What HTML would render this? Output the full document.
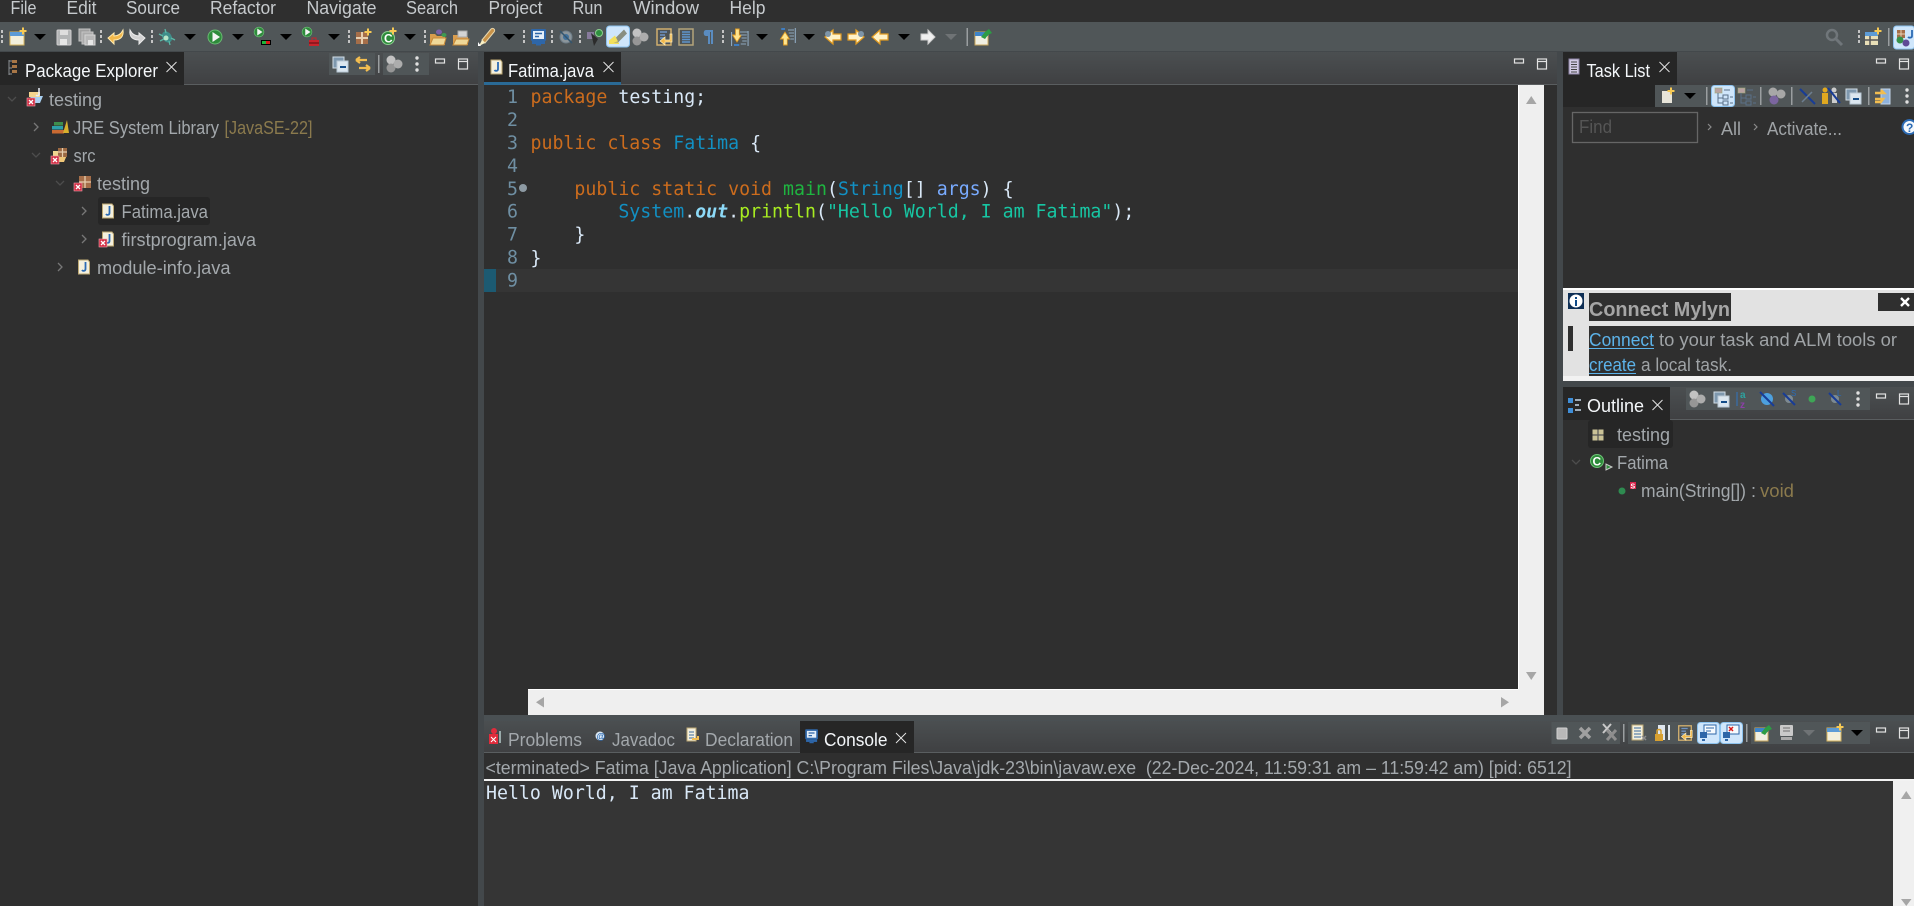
<!DOCTYPE html>
<html><head><meta charset="utf-8"><title>Eclipse</title>
<style>
html,body{margin:0;padding:0;width:1914px;height:906px;overflow:hidden;background:#2f2f2f}
svg{display:block}
text{font-family:"Liberation Sans",sans-serif;font-size:18px;white-space:pre}
.m{fill:#c6cacd}.w{fill:#f4f7fa}.g{fill:#a3a8ac}.o{fill:#8b7a4d}.d{fill:#9fa3a6}
.c text,text.c{font-family:"DejaVu Sans Mono",monospace;font-size:18.24px}
.k{fill:#cc6c1d}.n{fill:#d9e8f7}.b{fill:#1290c3}.l{fill:#6f8fa3}
</style></head><body>
<svg width="1914" height="906" viewBox="0 0 1914 906" xmlns="http://www.w3.org/2000/svg">
<defs>
<linearGradient id="tb" x1="0" y1="0" x2="0" y2="1"><stop offset="0" stop-color="#4b4f51"/><stop offset="1" stop-color="#3f4042"/></linearGradient>
<g id="drop"><path d="M-6-3H6L0 3Z" fill="#000"/></g>
<g id="dropg"><path d="M-6-3H6L0 3Z" fill="#6f7375"/></g>
<g id="grip" fill="#c4c4c4"><rect x="-1" y="-7" width="2" height="3"/><rect x="-1" y="-2" width="2" height="3"/><rect x="-1" y="3" width="2" height="3"/></g>
<g id="dots" fill="#e0e0e0"><circle cy="-6" r="1.7"/><circle r="1.7"/><circle cy="6" r="1.7"/></g>
<g id="plus" fill="#f6c955"><path d="M-1-3.500h2v2.500h2.500v2h-2.500v2.500h-2v-2.500h-2.500v-2h2.500z"/></g>
<g id="new"><rect x="-7" y="-5" width="14" height="13" fill="#f2efdc" stroke="#d8b65e"/><rect x="-7" y="-5" width="14" height="4" fill="#5c9bd6"/><use href="#plus" x="6" y="-6"/></g>
<g id="save"><rect x="-7" y="-7" width="14" height="15" rx="1" fill="#b4b6b7" stroke="#cfcfcf"/><rect x="-4" y="-7" width="8" height="5" fill="#dedede"/><rect x="-4" y="2" width="7" height="6" fill="#e6e6e6"/></g>
<g id="saveall"><rect x="-8" y="-8" width="11" height="12" fill="#a0a0a0" stroke="#c4c4c4"/><rect x="-5" y="-5" width="11" height="12" fill="#ababab" stroke="#c4c4c4"/><rect x="-2" y="-2" width="10" height="10" fill="#b8b8b8" stroke="#d4d4d4"/><rect x="1" y="3" width="5" height="5" fill="#e6e6e6"/></g>
<g id="undo"><path d="M7-7C8 0 4 3-2 3V7L-8 1-2-4V-1C2-1 5-3 7-7Z" fill="#f2b84a" stroke="#ffeab0"/></g>
<g id="redo"><path d="M-7-7C-8 0-4 3 2 3V7L8 1 2-4V-1C-2-1-5-3-7-7Z" fill="#d2d2d2" stroke="#ececec"/></g>
<g id="bug"><ellipse rx="4.500" ry="6" fill="#3f8e8a" transform="rotate(-35)"/><path d="M-8-3-4-1M-7 4-3 2M-2-8-1-4M8 3 4 1M3 8 2 4" stroke="#5ab8a6" stroke-width="1.300"/><circle cx="-1" cy="1" r="2.500" fill="#b8e6c8"/></g>
<g id="run"><circle r="7" fill="#2e8b3b" stroke="#69b873"/><path d="M-2.500-5 5 0-2.500 5Z" fill="#f4f4f4"/></g>
<g id="cov"><use href="#run" transform="translate(-4 -5) scale(.7)"/><rect x="-2" y="3" width="10" height="5" fill="#000"/><rect x="-1" y="4" width="4" height="3" fill="#1db53a"/><rect x="3" y="4" width="4" height="3" fill="#d81818"/></g>
<g id="ext"><use href="#run" transform="translate(-4 -5) scale(.7)"/><rect x="-2" y="3" width="10" height="6" fill="#c8242c"/><rect x="1" y="1" width="4" height="2.500" fill="none" stroke="#c8242c"/><rect x="-2" y="5.500" width="10" height="1" fill="#5c0b10"/></g>
<g id="pkgn"><rect x="-7" y="-5" width="12" height="12" fill="#a56e49"/><path d="M-7 1H5M-1-5V7" stroke="#e6cfb0" stroke-width="2"/><use href="#plus" x="5" y="-5"/></g>
<g id="cls"><circle cy="1" r="6.500" fill="#2e8b3b" stroke="#8ad08f"/><text x="-4" y="5.500" style="font-size:12px;font-weight:bold" fill="#fff">C</text><use href="#plus" x="5" y="-6"/></g>
<g id="folderp"><path d="M-8-3h5l2 2h8v9h-15z" fill="#d99c4d"/><path d="M-8 8-5 1H8L6 8Z" fill="#f0d898" stroke="#c68a3a"/><ellipse cx="1" cy="-5" rx="3" ry="2.500" fill="#7a60a8"/><ellipse cx="6" cy="-2" rx="2.500" ry="2" fill="#3e9a52"/></g>
<g id="foldero"><path d="M-8-2h5l2 2h8v8h-15z" fill="#d99c4d"/><rect x="-3" y="-6" width="9" height="6" fill="#d4d4d4" stroke="#aaa"/><path d="M-8 8-5 2H8L6 8Z" fill="#f0d898" stroke="#c68a3a"/></g>
<g id="pen"><path d="M-4 3 5-8C7-10 10-7 8-5L-1 6Z" fill="#c89248" stroke="#e8d8b0"/><path d="M-4 3-1 6-7 9Z" fill="#f8f0c4"/><path d="M-8 5-5 9-8 9Z" fill="#fff"/></g>
<g id="term"><rect x="-8" y="-8" width="15" height="12" rx="1" fill="#2e66a8"/><rect x="-6" y="-6" width="11" height="8" fill="#e4eef8"/><path d="M-4-3.500H3M-4-.5H0" stroke="#2e66a8" stroke-width="1.500"/><rect x="-7" y="4" width="13" height="3" fill="#2e66a8"/><rect x="-3" y="7" width="5" height="1.500" fill="#2e66a8"/></g>
<g id="scan"><circle r="6" fill="#8b959b" stroke="#6e7d88" stroke-width="1"/><circle r="3" fill="#40719c"/><path d="M-6-6 6 6" stroke="#33556e" stroke-width="1.500"/></g>
<g id="pers"><rect x="-7" y="-5" width="7" height="7" fill="#877a9c"/><path d="M-3-4 0 9 4 2Z" fill="#2b2b2b"/><circle cx="5" cy="-4" r="3.500" fill="#2f8f3f" stroke="#8bd08f"/></g>
<g id="hl"><rect x="-11.500" y="-10.500" width="23" height="21" rx="3" fill="#cfe6fb" stroke="#8cc2ee"/><path d="M-7 6 6-7 9-3 0 6Z" fill="#898e80"/><path d="M-9 4-3-1 0 5-9 7Z" fill="#f2e05c"/><rect x="-9" y="6" width="10" height="1.500" fill="#f2e05c"/></g>
<g id="focus"><circle cx="-3" cy="-4" r="4.500" fill="#c2c2c2"/><circle cx="-3" cy="4" r="4.500" fill="#969696"/><circle cx="4" cy="0" r="4.500" fill="#adadad"/></g>
<g id="focusp"><circle cx="-3" cy="-4" r="4.500" fill="#a7a7a7"/><circle cx="5" cy="-2" r="4.500" fill="#a7a7a7"/><circle cx="-2" cy="4" r="4.500" fill="#7b659f"/></g>
<g id="nxtann"><rect x="-7" y="-8" width="14" height="16" fill="#4d5254" stroke="#cfae6e" stroke-width="1.500"/><path d="M-4-5H3M-4-2H1M-4 1H0" stroke="#6e93c4" stroke-width="1.500"/><path d="M6-3V3H1V0L-4 4 1 8V5H8V-3Z" fill="#f2b84a" stroke="#fff0c0" stroke-width=".7"/></g>
<g id="block"><rect x="-7" y="-8" width="14" height="16" fill="#4d5254" stroke="#b4a47a" stroke-width="1.500"/><path d="M-4-5H4M-4-2.500H4M-4 0H4M-4 2.500H4M-4 5H4" stroke="#5f95cc" stroke-width="1.500"/></g>
<g id="para"><path d="M-1-7H-3C-6-7-6-1-3-1H-1V7H1V-5H2V7H4V-7Z" fill="#5a8cc0"/></g>
<g id="ndn"><path d="M-2-9H3V-3H6L0 4-6-3H-2Z" fill="#ffe58e" stroke="#e09a20"/><path d="M4-6H14M5-3H13M6 0H13M7 3H13M5 6H12" stroke="#8ea8be" stroke-width="1"/><rect x="14" y="-7" width="1.500" height="15" fill="#8ea8be"/><rect x="-8" y="-6" width="1.500" height="14" fill="#8ea8be"/><rect x="-4" y="6" width="7" height="2" fill="#3f7dc0"/></g>
<g id="nup"><path d="M-2 9H3V3H6L0-4-6 3H-2Z" fill="#ffe58e" stroke="#e09a20"/><path d="M4-6H12M5-3H12M6 0H12M7 3H12" stroke="#8ea8be" stroke-width="1"/><rect x="13" y="-8" width="1.500" height="15" fill="#8ea8be"/><rect x="-5" y="-8" width="5" height="2" fill="#3f7dc0"/></g>
<g id="al"><path d="M8-3V3H0V7L-8 0 0-7V-3Z" fill="#fff2c8" stroke="#e09a20" stroke-width="1.200"/></g>
<g id="ar"><path d="M-8-3V3H0V7L8 0 0-7V-3Z" fill="#fff2c8" stroke="#e09a20" stroke-width="1.200"/></g>
<g id="arw"><path d="M-7-3V3H0V7L7 0 0-7V-3Z" fill="#f0f0f0" stroke="#ccc"/></g>
<g id="pin"><rect x="-7" y="-5" width="13" height="13" fill="#f0efe2" stroke="#cda95e"/><rect x="-7" y="-5" width="13" height="4" fill="#3f84c8"/><path d="M-1 0 3-5 7-8 10-4 6-2 3 2Z" fill="#2d9c45"/></g>
<g id="srch"><circle cx="-2" cy="-2" r="5" fill="none" stroke="#70767a" stroke-width="2.500"/><path d="M2 2 8 8" stroke="#70767a" stroke-width="3"/></g>
<g id="pers2"><rect x="-7" y="-5" width="13" height="13" fill="#e8dfb8"/><rect x="-7" y="-5" width="13" height="4" fill="#5c9bd6"/><path d="M-2-1V8M-7 3H6" stroke="#555" stroke-width="1.500"/><use href="#plus" x="6" y="-6"/></g>
<g id="coll"><rect x="-7" y="-7" width="11" height="11" fill="#7e98ae" stroke="#d2dde6"/><rect x="-3" y="-3" width="11" height="11" fill="#dbe6ef" stroke="#b9c8d5"/><rect x="0" y="2" width="6" height="2" fill="#144c88"/></g>
<g id="link"><path d="M-7-4H4M-7-4-3-7M-7-4-3-1M7 4H-4M7 4 3 1M7 4 3 7" stroke="#f2bd50" stroke-width="2.200" fill="none"/></g>
<g id="min"><rect x="-4.500" y="-2" width="9" height="4" fill="none" stroke="#e2e2e2" stroke-width="1.200"/></g>
<g id="max"><rect x="-4.500" y="-5" width="9" height="10" fill="none" stroke="#e2e2e2" stroke-width="1.200"/><path d="M-4.500-2.500H4.500" stroke="#e2e2e2" stroke-width="1.200"/></g>
<g id="x"><path d="M-5-5 5 5M5-5-5 5" stroke="#e8e8e8" stroke-width=".9"/></g>
<g id="cr" stroke-width="1.300" fill="none"><path d="M-2-4 2 0-2 4" stroke="#777"/></g>
<g id="cd" stroke-width="1.300" fill="none"><path d="M-4-2 0 2 4-2" stroke="#4d4d4d"/></g>
<g id="err"><rect x="-4" y="-4" width="8" height="8" fill="#d32f46" stroke="#f2a0ac" stroke-width=".6"/><path d="M-2-2 2 2M2-2-2 2" stroke="#fff" stroke-width="1.300"/></g>
<g id="jfile"><path d="M-5.500-7H4L5.500-5V7H-5.500Z" fill="#f4f0de" stroke="#bda873"/><path d="M1.500-5V2C1.500 4-1 4.500-2 3" fill="none" stroke="#2c6bb4" stroke-width="1.800"/></g>
<g id="prj"><path d="M-6-1 7-1 4 6H-4Z" fill="#a9d0f2"/><path d="M-7-5H4V0H-7Z" fill="#f5d48e"/><path d="M3-9V-3C3-1 1-1 0-2" fill="none" stroke="#e8eef8" stroke-width="1.500"/><use href="#err" x="-5" y="5"/></g>
<g id="lib"><rect x="-8" y="3" width="12" height="3.500" fill="#c96a32"/><rect x="-8" y="-1" width="11" height="3.500" fill="#2d9fa8"/><rect x="-6" y="-5" width="9" height="3.500" fill="#3e8e4c"/><path d="M3 6 7-7 9 6Z" fill="#d8b02e"/></g>
<g id="src"><path d="M-7 0H7L4 7H-4Z" fill="#f0c778"/><rect x="-2" y="-7" width="9" height="9" fill="#9c6942"/><path d="M-2-3H7M2.500-7V2" stroke="#e6cfb0" stroke-width="1.200"/><path d="M-7-4H-2V1H-7Z" fill="#f0d690"/><use href="#err" x="-5" y="5"/></g>
<g id="pk"><rect x="-5" y="-7" width="12" height="12" fill="#a56e49"/><path d="M-5-1H7M1-7V5" stroke="#e6cfb0" stroke-width="1.300"/><use href="#err" x="-6" y="4"/></g>
<g id="ttl"><rect x="-6" y="-8" width="10" height="15" fill="#d2cbe4" stroke="#8d84a6"/><path d="M-4-5H2M-4-2.500H2M-4 0H2M-4 2.500H2M-4 5H2" stroke="#444" stroke-width="1"/></g>
<g id="hier"><rect x="-8" y="-8" width="7" height="5" fill="#b9a2a2" stroke="#9a7" stroke-opacity=".6"/><path d="M-5-3V7H0M-5 2H0" stroke="#5a7088" fill="none"/><rect x="0" y="-1" width="5" height="4" fill="none" stroke="#5a7088"/><rect x="0" y="5" width="5" height="4" fill="none" stroke="#5a7088"/><path d="M1-6H7M7 1H10M7 7H10" stroke="#5a7088"/></g>
</defs>

<!-- menu bar -->
<rect width="1914" height="22" fill="#2f2f2f"/>
<text class="m" x="10.500" y="14" textLength="26" lengthAdjust="spacingAndGlyphs">File</text>
<text class="m" x="66.500" y="14" textLength="30" lengthAdjust="spacingAndGlyphs">Edit</text>
<text class="m" x="126" y="14" textLength="54" lengthAdjust="spacingAndGlyphs">Source</text>
<text class="m" x="210" y="14" textLength="66" lengthAdjust="spacingAndGlyphs">Refactor</text>
<text class="m" x="306.500" y="14" textLength="70" lengthAdjust="spacingAndGlyphs">Navigate</text>
<text class="m" x="406" y="14" textLength="52" lengthAdjust="spacingAndGlyphs">Search</text>
<text class="m" x="488.500" y="14" textLength="54" lengthAdjust="spacingAndGlyphs">Project</text>
<text class="m" x="572.500" y="14" textLength="30" lengthAdjust="spacingAndGlyphs">Run</text>
<text class="m" x="633" y="14" textLength="66" lengthAdjust="spacingAndGlyphs">Window</text>
<text class="m" x="729.500" y="14" textLength="36" lengthAdjust="spacingAndGlyphs">Help</text>

<!-- main toolbar -->
<rect y="22" width="1914" height="29" fill="#505658"/>
<use href="#grip" x="2" y="37"/><use href="#new" x="17" y="37"/><use href="#drop" x="40" y="37"/>
<use href="#save" x="64" y="37"/><use href="#saveall" x="87" y="37"/><use href="#grip" x="101" y="37"/>
<use href="#undo" x="116" y="37"/><use href="#redo" x="137" y="37"/><use href="#grip" x="152" y="37"/>
<use href="#bug" x="167" y="37"/><use href="#drop" x="190" y="37"/>
<use href="#run" x="215" y="37"/><use href="#drop" x="238" y="37"/>
<use href="#cov" x="263" y="37"/><use href="#drop" x="286" y="37"/>
<use href="#ext" x="311" y="37"/><use href="#drop" x="334" y="37"/><use href="#grip" x="349" y="37"/>
<use href="#pkgn" x="363" y="37"/><use href="#cls" x="388" y="37"/><use href="#drop" x="410" y="37"/><use href="#grip" x="425" y="37"/>
<use href="#folderp" x="438" y="37"/><use href="#foldero" x="461" y="37"/><use href="#pen" x="486" y="37"/><use href="#drop" x="509" y="37"/><use href="#grip" x="524" y="37"/>
<use href="#term" x="539" y="37"/><use href="#grip" x="552" y="37"/><use href="#scan" x="566" y="37"/><use href="#grip" x="580" y="37"/>
<use href="#pers" x="594" y="37"/><use href="#hl" x="618" y="36.500"/><use href="#focus" x="640" y="37"/>
<use href="#nxtann" x="664" y="37"/><use href="#block" x="686" y="37"/><use href="#para" x="709" y="37"/><use href="#grip" x="723" y="37"/>
<use href="#ndn" transform="translate(737 38) scale(.75 1)"/><use href="#drop" x="762" y="37"/><use href="#nup" transform="translate(785 36) scale(.75 1)"/><use href="#drop" x="809" y="37"/>
<use href="#al" x="833" y="37"/><circle cx="828" cy="34" r="3" fill="#7e95a8"/><use href="#ar" x="856" y="37"/><circle cx="861" cy="34" r="3" fill="#7e95a8"/>
<use href="#al" x="880" y="37"/><use href="#drop" x="904" y="37"/><use href="#arw" x="928" y="37"/><use href="#dropg" x="951" y="37"/>
<rect x="966.500" y="28" width="1.500" height="18" fill="#9a9ea0"/><use href="#pin" x="982" y="37"/>
<use href="#srch" x="1834" y="37"/><use href="#grip" x="1859" y="37"/><use href="#pers2" x="1872" y="37"/><rect x="1888" y="28" width="1.500" height="18" fill="#9a9ea0"/>
<rect x="1893.500" y="26" width="21" height="23" rx="3" fill="#cfe6fb" stroke="#8cc2ee"/>
<rect x="1897" y="30" width="8" height="8" fill="#a56e49"/><path d="M1897 34h8M1901 30v8" stroke="#e6cfb0"/><circle cx="1900" cy="40" r="3.500" fill="#37914a"/><circle cx="1906" cy="43" r="3.500" fill="#5f4a96"/><path d="M1912 30v6c0 2-3 2-4 1" fill="none" stroke="#2c6bb4" stroke-width="1.800"/>

<!-- sashes -->
<rect y="51" width="1914" height="1" fill="#43484b"/>
<rect x="478" y="51" width="6" height="855" fill="#43484b"/>
<rect x="1557" y="51" width="6" height="670" fill="#43484b"/>
<rect x="484" y="715" width="1430" height="6" fill="#4a5053"/>

<!-- package explorer tab -->
<rect y="52" width="478" height="33" fill="url(#tb)"/><rect y="84" width="478" height="1" fill="#5a5e60"/>
<rect y="52" width="184" height="33" fill="#262626"/>
<g transform="translate(13 67)"><path d="M-4-7V8M-4-6H-1M-4 1H-1M-4 7H-1" stroke="#8a8f93" fill="none"/><rect x="-1" y="-7" width="5" height="3" fill="#a87646"/><rect x="-1" y="-2" width="5" height="3" fill="#a87646"/><rect x="-1" y="3" width="5" height="3" fill="#a87646"/></g>
<text class="w" x="25" y="77" textLength="133" lengthAdjust="spacingAndGlyphs">Package Explorer</text>
<use href="#x" x="171.500" y="67"/>
<rect x="329" y="53" width="46" height="22" fill="#505658"/><rect x="383" y="53" width="46" height="22" fill="#505658"/>
<use href="#coll" x="340" y="64"/><use href="#link" x="363" y="64"/><rect x="378" y="55" width="1.500" height="18" fill="#9a9ea0"/>
<use href="#focus" x="394" y="64"/><use href="#dots" x="417" y="64"/>
<use href="#min" x="440" y="61"/><use href="#max" x="463" y="64"/>

<!-- tree -->
<rect x="98" y="197" width="112" height="28" rx="3" fill="#262626"/>
<use href="#cd" x="12" y="99"/><use href="#prj" x="36" y="97"/><text class="g" x="49" y="106" textLength="53" lengthAdjust="spacingAndGlyphs">testing</text>
<use href="#cr" x="36" y="127"/><use href="#lib" x="60" y="127"/><text class="g" x="73" y="134" textLength="146" lengthAdjust="spacingAndGlyphs">JRE System Library</text><text class="o" x="224.500" y="134" textLength="88" lengthAdjust="spacingAndGlyphs">[JavaSE-22]</text>
<use href="#cd" x="36" y="155"/><use href="#src" x="60" y="155"/><text class="g" x="73.500" y="162" textLength="22" lengthAdjust="spacingAndGlyphs">src</text>
<use href="#cd" x="60" y="183"/><use href="#pk" x="84" y="183"/><text class="g" x="97" y="190" textLength="53" lengthAdjust="spacingAndGlyphs">testing</text>
<use href="#cr" x="84" y="211"/><use href="#jfile" x="108" y="211"/><text class="g" x="121.500" y="218" textLength="86.500" lengthAdjust="spacingAndGlyphs">Fatima.java</text>
<use href="#cr" x="84" y="239"/><use href="#jfile" x="108" y="239"/><use href="#err" x="103" y="243"/><text class="g" x="121.500" y="246" textLength="134.500" lengthAdjust="spacingAndGlyphs">firstprogram.java</text>
<use href="#cr" x="60" y="267"/><use href="#jfile" x="84" y="267"/><text class="g" x="97" y="274" textLength="133.500" lengthAdjust="spacingAndGlyphs">module-info.java</text>

<!-- editor tabs -->
<rect x="484" y="52" width="1073" height="33" fill="url(#tb)"/><rect x="484" y="84" width="1073" height="1" fill="#5a5e60"/>
<rect x="484" y="52" width="137" height="30" fill="#262626"/><rect x="484" y="82" width="137" height="3" fill="#2a6a96"/>
<use href="#jfile" x="496.500" y="67"/>
<text class="w" x="508" y="77" textLength="86" lengthAdjust="spacingAndGlyphs">Fatima.java</text>
<use href="#x" x="608.500" y="67"/>
<use href="#min" x="1519" y="61"/><use href="#max" x="1542" y="64"/>

<!-- editor -->
<rect x="484" y="269" width="1034" height="23" fill="#353535"/>
<rect x="484" y="269" width="12" height="23" fill="#1c5a72"/>
<g class="c">
<text class="l" x="507" y="103">1</text><text class="l" x="507" y="126">2</text><text class="l" x="507" y="149">3</text><text class="l" x="507" y="172">4</text><text class="l" x="507" y="195">5</text><text class="l" x="507" y="217.500">6</text><text class="l" x="507" y="240.500">7</text><text class="l" x="507" y="263.500">8</text><text class="l" x="507" y="286.500">9</text>
<text x="530.500" y="103"><tspan class="k">package</tspan><tspan class="n"> testing;</tspan></text>
<text x="530.500" y="149"><tspan class="k">public class</tspan><tspan class="n"> </tspan><tspan class="b">Fatima</tspan><tspan class="n"> {</tspan></text>
<text x="530.500" y="195"><tspan class="n">    </tspan><tspan class="k">public static void</tspan><tspan class="n"> </tspan><tspan fill="#1eb540">main</tspan><tspan class="n">(</tspan><tspan class="b">String</tspan><tspan class="n">[] </tspan><tspan fill="#79abff">args</tspan><tspan class="n">) {</tspan></text>
<text x="530.500" y="217.500"><tspan class="n">        </tspan><tspan class="b">System</tspan><tspan class="n">.</tspan><tspan fill="#8ddaf8" font-style="italic" font-weight="bold">out</tspan><tspan class="n">.</tspan><tspan fill="#a7ec21">println</tspan><tspan class="n">(</tspan><tspan fill="#17c6a3">"Hello World, I am Fatima"</tspan><tspan class="n">);</tspan></text>
<text class="n" x="530.500" y="240.500">    }</text>
<text class="n" x="530.500" y="264">}</text>
</g>
<circle cx="523" cy="188" r="4" fill="#8d9aa3"/>

<!-- editor scrollbars -->
<rect x="1518" y="85" width="26" height="630" fill="#efefef"/>
<rect x="528" y="689" width="1016" height="26" fill="#efefef"/><rect x="528" y="689" width="990" height="1" fill="#fff"/>
<rect x="1518" y="85" width="1" height="604" fill="#fff"/>
<path d="M1526 104h10.500l-5.250-8z" fill="#a6a6a6"/><path d="M1526 672h10.500l-5.250 8z" fill="#a6a6a6"/>
<path d="M544 697v10.500l-8-5.250z" fill="#a6a6a6"/><path d="M1501 697v10.500l8-5.250z" fill="#a6a6a6"/>

<!-- task list -->
<rect x="1563" y="52" width="351" height="33" fill="url(#tb)"/>
<rect x="1563" y="52" width="114" height="33" fill="#262626"/>
<use href="#ttl" x="1575" y="67"/>
<text class="w" x="1586.500" y="77" textLength="63.500" lengthAdjust="spacingAndGlyphs">Task List</text>
<use href="#x" x="1664.500" y="67"/>
<use href="#min" x="1881" y="61"/><use href="#max" x="1904" y="64"/>
<rect x="1563" y="85" width="92" height="22" fill="#262626"/><rect x="1655" y="85" width="259" height="22" fill="#505658"/>
<g transform="translate(1667 96)"><rect x="-5" y="-5" width="10" height="12" fill="#e8e5da"/><use href="#plus" x="4" y="-5"/></g>
<use href="#drop" x="1690" y="96"/><rect x="1706" y="87" width="1.500" height="18" fill="#9a9ea0"/>
<rect x="1711.500" y="85.500" width="23" height="21" rx="3" fill="#cfe6fb" stroke="#8cc2ee"/><use href="#hier" x="1723" y="96"/>
<use href="#hier" x="1746" y="96"/><rect x="1760" y="87" width="1.500" height="18" fill="#9a9ea0"/>
<use href="#focusp" x="1776" y="96"/><rect x="1791" y="87" width="1.500" height="18" fill="#9a9ea0"/>
<path d="M1800 89 1815 104" stroke="#183c96" stroke-width="2"/><path d="M1802 102 1806 98 1812 92" stroke="#6d7f90" stroke-width="1.500" fill="none"/>
<g transform="translate(1825 96)"><circle cy="-6" r="2.500" fill="#e0a820"/><rect x="-3" y="-3" width="6" height="11" fill="#e0a820"/></g><circle cx="1834" cy="90" r="2.500" fill="#ccc"/><rect x="1832" y="93" width="5" height="10" fill="#ccc"/><path d="M1828 88 1840 103" stroke="#183c96" stroke-width="2"/>
<use href="#coll" x="1853" y="96"/><rect x="1868" y="87" width="1.500" height="18" fill="#9a9ea0"/>
<g transform="translate(1883 96)"><rect x="-2" y="-7" width="9" height="15" fill="#8fb2dc" stroke="#c4d6ea"/><path d="M-8-3H1L-2-6M-3 6H-8" stroke="#f2bd50" stroke-width="2.500" fill="none"/><path d="M-8 3H0L-3 7" stroke="#f2bd50" stroke-width="2.500" fill="none"/></g>
<use href="#dots" x="1907" y="96"/>
<rect x="1572.500" y="112.500" width="125" height="30" fill="none" stroke="#666" stroke-width="1.300"/>
<text fill="#555" x="1579" y="133" textLength="33" lengthAdjust="spacingAndGlyphs">Find</text>
<path d="M1708 124l3 3-3 3" fill="none" stroke="#8a8a8a" stroke-width="1.200"/><text class="d" x="1721" y="135" textLength="20" lengthAdjust="spacingAndGlyphs">All</text>
<path d="M1754 124l3 3-3 3" fill="none" stroke="#8a8a8a" stroke-width="1.200"/><text class="d" x="1767" y="135" textLength="75" lengthAdjust="spacingAndGlyphs">Activate...</text>
<circle cx="1909.500" cy="127" r="7" fill="#f4f8fc" stroke="#2c6bb4" stroke-width="2"/><text x="1906" y="132" style="font-size:12px;font-weight:bold" fill="#2c6bb4">?</text>

<!-- Connect Mylyn -->
<rect x="1563" y="288" width="351" height="2" fill="#fff"/>
<rect x="1563" y="290" width="351" height="91" fill="#e2e2e2"/>
<rect x="1563" y="376" width="351" height="5" fill="#f2f2f2"/>
<rect x="1568" y="293" width="16" height="16" fill="#0f2f55"/><circle cx="1576" cy="301" r="6.500" fill="#fff"/><rect x="1575" y="297" width="2" height="2" fill="#0f4a88"/><rect x="1575" y="300" width="2" height="6" fill="#0f4a88"/>
<rect x="1589" y="293" width="142" height="28" fill="#2f2f2f"/>
<text x="1589" y="316" style="font-size:20px;font-weight:bold" fill="#a5a5a5" textLength="141" lengthAdjust="spacingAndGlyphs">Connect Mylyn</text>
<rect x="1878" y="293" width="36" height="18" fill="#2f2f2f"/><path d="M1901 298 1909 306M1909 298 1901 306" stroke="#fff" stroke-width="2.400"/>
<rect x="1568" y="326" width="5" height="25" fill="#2f2f2f"/>
<rect x="1589" y="326" width="325" height="50" fill="#2f2f2f"/>
<text x="1589" y="346" fill="#5cb3ea" textLength="65" lengthAdjust="spacingAndGlyphs">Connect</text><rect x="1589" y="348" width="65" height="1" fill="#5cb3ea"/>
<text class="d" x="1659" y="346" textLength="238" lengthAdjust="spacingAndGlyphs">to your task and ALM tools or</text>
<text x="1589" y="371" fill="#5cb3ea" textLength="47" lengthAdjust="spacingAndGlyphs">create</text><rect x="1589" y="373" width="47" height="1" fill="#5cb3ea"/>
<text class="d" x="1641" y="371" textLength="91" lengthAdjust="spacingAndGlyphs">a local task.</text>
<rect x="1563" y="381" width="351" height="6" fill="#43484b"/>

<!-- outline -->
<rect x="1563" y="387" width="351" height="33" fill="url(#tb)"/><rect x="1670" y="419" width="244" height="1" fill="#5a5e60"/>
<rect x="1563" y="387" width="107" height="33" fill="#262626"/>
<g fill="#3f8ed8"><rect x="1568" y="398" width="5" height="5"/><rect x="1568" y="408" width="5" height="5"/></g><path d="M1575 400h6M1575 405h4M1575 410h6" stroke="#c6d8ea" stroke-width="1.500"/>
<text class="w" x="1587" y="412" textLength="57" lengthAdjust="spacingAndGlyphs">Outline</text>
<use href="#x" x="1657.500" y="405"/>
<rect x="1686" y="388" width="184" height="22" fill="#505658"/>
<use href="#focus" x="1697" y="399"/><use href="#coll" x="1721" y="399"/>
<g transform="translate(1743 399)"><path d="M-6-7V7" stroke="#3a6a9e" stroke-width="1.500"/><text x="-3" y="-1" style="font-size:10px;font-weight:bold" fill="#2da3a0">a</text><text x="-3" y="9" style="font-size:10px;font-weight:bold" fill="#8d3fa8">z</text></g>
<g transform="translate(1767 399)"><circle r="6" fill="#4da0df"/><path d="M-7-7 7 7" stroke="#183c96" stroke-width="2"/></g>
<g transform="translate(1789 399)"><circle r="4" fill="#7d8a92"/><path d="M-6-6 6 6" stroke="#183c96" stroke-width="2"/><text x="2" y="-3" style="font-size:8px" fill="#2c6bb4">S</text></g>
<circle cx="1812" cy="399" r="3.500" fill="#3ea556"/>
<g transform="translate(1835 399)"><circle r="4" fill="#7d8a92"/><path d="M-6-6 6 6" stroke="#183c96" stroke-width="2"/><text x="2" y="-3" style="font-size:8px" fill="#2c6bb4">L</text></g>
<use href="#dots" x="1858" y="399"/>
<use href="#min" x="1881" y="396"/><use href="#max" x="1904" y="399"/>
<rect x="1588" y="420" width="85" height="28" rx="3" fill="#262626"/>
<g transform="translate(1598 435)"><rect x="-5.500" y="-5.500" width="11" height="11" fill="#c9c196"/><path d="M-5.500 0H5.500M0-5.500V5.500" stroke="#555" stroke-width="1.200"/></g>
<text class="g" x="1617" y="441" textLength="53" lengthAdjust="spacingAndGlyphs">testing</text>
<use href="#cd" x="1576" y="462"/>
<circle cx="1597" cy="461" r="6.500" fill="#2e8b3b" stroke="#6fc177"/><text x="1592.500" y="465.500" style="font-size:12px;font-weight:bold" fill="#fff">C</text>
<path d="M1606 464v6l6-3z" fill="#2e8b3b" stroke="#ccc"/>
<text class="g" x="1617" y="469" textLength="51" lengthAdjust="spacingAndGlyphs">Fatima</text>
<circle cx="1622" cy="491" r="3.500" fill="#2e8b50"/><rect x="1630" y="482" width="6" height="7" fill="#d8234a"/><text x="1630.500" y="488.500" style="font-size:7px;font-weight:bold" fill="#fff">S</text>
<text class="g" x="1641" y="497" textLength="105" lengthAdjust="spacingAndGlyphs">main(String[])</text>
<text class="g" x="1751" y="497">:</text><text class="o" x="1760" y="497" textLength="34" lengthAdjust="spacingAndGlyphs">void</text>

<!-- bottom tabs -->
<rect x="484" y="721" width="1430" height="32" fill="url(#tb)"/><rect x="484" y="752" width="1430" height="1" fill="#5a5e60"/>
<rect x="800" y="721" width="114" height="32" fill="#262626"/>
<g transform="translate(495 738)"><circle cx="-1" cy="-7" r="3" fill="#e02c3c"/><rect x="-6" y="-4" width="9" height="10" fill="#e02c3c"/><path d="M-4-1 1 4M1-1-4 4" stroke="#fff"/><path d="M5-7V5" stroke="#9aa" stroke-width="2"/></g>
<text class="g" x="508" y="746" textLength="74" lengthAdjust="spacingAndGlyphs">Problems</text>
<circle cx="600" cy="736" r="4.500" fill="#dbe8f4"/><text x="596.500" y="739.500" style="font-size:9px;font-weight:bold" fill="#2c6bb4">@</text>
<text class="g" x="612" y="746" textLength="63" lengthAdjust="spacingAndGlyphs">Javadoc</text>
<g transform="translate(692 736)"><rect x="-5" y="-8" width="9" height="13" fill="#f4f0de" stroke="#bda873"/><path d="M-3-4H2M-3-1H2M-3 2H2" stroke="#3a6a9e"/><path d="M0 3H6V0" stroke="#f2bd50" stroke-width="2" fill="none"/></g>
<text class="g" x="705" y="746" textLength="88" lengthAdjust="spacingAndGlyphs">Declaration</text>
<g transform="translate(812 736) scale(.85)"><use href="#term"/></g>
<text class="w" x="824" y="746" textLength="63.500" lengthAdjust="spacingAndGlyphs">Console</text>
<use href="#x" x="901" y="738"/>
<rect x="1551.500" y="722" width="68.500" height="22" fill="#505658"/><rect x="1628" y="722" width="115" height="22" fill="#505658"/><rect x="1751" y="722" width="119" height="22" fill="#505658"/>
<rect x="1557" y="728" width="10" height="11" rx="1" fill="#b8b8b8" stroke="#d0d0d0"/>
<path d="M1580 728 1590 738M1590 728 1580 738" stroke="#a0a0a0" stroke-width="3.500"/>
<path d="M1603 724 1611 733M1611 724 1603 733" stroke="#c8c8c8" stroke-width="2"/><path d="M1607 730 1616 740M1616 730 1607 740" stroke="#8e8e8e" stroke-width="3"/>
<rect x="1623" y="724" width="1.500" height="18" fill="#9a9ea0"/>
<g transform="translate(1638 733)"><rect x="-6" y="-8" width="11" height="15" fill="#f4f0de" stroke="#bda873"/><path d="M-4-5H3M-4-2H3M-4 1H3M-4 4H3" stroke="#3a6a9e"/><path d="M4 3 8 7M8 3 4 7" stroke="#8e8e8e" stroke-width="1.500"/></g>
<g transform="translate(1662 733)"><rect x="-4" y="-8" width="12" height="15" fill="#dfe6ee"/><rect x="3" y="-8" width="3" height="15" fill="#4d5254"/><rect x="-7" y="1" width="8" height="7" fill="#d8a030"/><path d="M-5 1V-2C-5-4-1-4-1-2V1" fill="none" stroke="#d8a030" stroke-width="1.500"/></g>
<use href="#nxtann" transform="translate(1685 733) scale(.9)"/>
<rect x="1697.500" y="722.500" width="22" height="21" rx="3" fill="#cfe6fb" stroke="#8cc2ee"/><rect x="1720.500" y="722.500" width="22" height="21" rx="3" fill="#cfe6fb" stroke="#8cc2ee"/>
<g transform="translate(1708 733)"><rect x="-4" y="-8" width="12" height="9" fill="#f6fafd" stroke="#2e66a8"/><path d="M-2-5H6M-2-2H3" stroke="#2e66a8"/><rect x="-8" y="-1" width="7" height="6" fill="#2e66a8"/><rect x="-6" y="6" width="3" height="2" fill="#2e66a8"/></g>
<g transform="translate(1731 733)"><rect x="-4" y="-8" width="12" height="9" fill="#f6fafd" stroke="#2e66a8"/><path d="M-2-6 2-2M2-6-2-2" stroke="#d81818" stroke-width="1.500"/><rect x="-8" y="-1" width="7" height="6" fill="#2e66a8"/><rect x="-6" y="6" width="3" height="2" fill="#2e66a8"/></g>
<rect x="1746" y="724" width="1.500" height="18" fill="#9a9ea0"/>
<use href="#pin" x="1762" y="733"/>
<g transform="translate(1787 733)"><rect x="-7" y="-8" width="13" height="11" rx="1" fill="#c9c9c9"/><path d="M-4-5H3M-4-2H3" stroke="#6f6f6f"/><rect x="-6" y="4" width="11" height="3" fill="#aaa"/></g>
<use href="#dropg" x="1809" y="733"/><use href="#new" x="1834" y="733"/><use href="#drop" x="1857" y="733"/>
<use href="#min" x="1881" y="730"/><use href="#max" x="1904" y="733"/>

<!-- console -->
<rect x="484" y="753" width="1430" height="26" fill="#2f2f2f"/>
<text class="g" x="485.500" y="774" textLength="1086" lengthAdjust="spacingAndGlyphs">&lt;terminated&gt; Fatima [Java Application] C:\Program Files\Java\jdk-23\bin\javaw.exe  (22-Dec-2024, 11:59:31 am – 11:59:42 am) [pid: 6512]</text>
<rect x="484" y="779" width="1430" height="2" fill="#f2f2f2"/>
<rect x="484" y="781" width="1430" height="125" fill="#353535"/>
<text class="c n" x="486" y="799" fill="#f0f0f0">Hello World, I am Fatima</text>
<rect x="1893" y="781" width="21" height="125" fill="#f0f0f0"/>
<path d="M1901 799h10.500l-5.250-8z" fill="#a6a6a6"/><path d="M1901 899h10.500l-5.250 7z" fill="#a6a6a6"/>
</svg>
</body></html>
